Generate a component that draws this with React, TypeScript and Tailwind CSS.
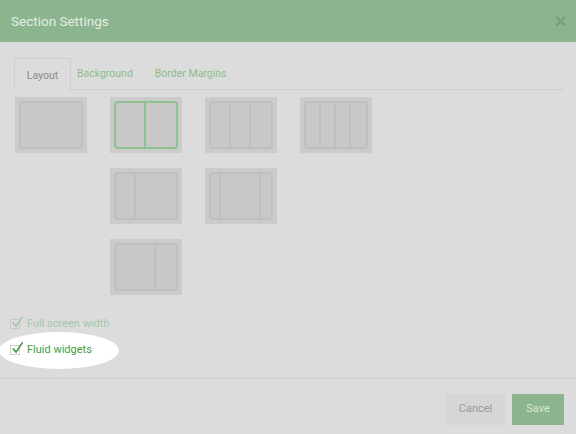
import { CSSProperties } from 'react';

type Thumb = { cols: number[]; active?: boolean };

const rows: (Thumb | null)[][] = [
  [{ cols: [1] }, { cols: [1, 1], active: true }, { cols: [1, 1, 1] }, { cols: [1, 1, 1, 1] }],
  [null, { cols: [1, 2] }, { cols: [1, 4, 1] }],
  [null, { cols: [2, 1] }],
];

function LayoutThumb({ cols, active }: Thumb) {
  const style: CSSProperties = { gridTemplateColumns: cols.map((c) => `${c}fr`).join(' ') };
  return (
    <button className="w-[72px] h-[56px] bg-[#cbcbcb] p-[4px]">
      <div
        className={`grid h-full rounded-[4px] border-2 bg-[#c8c8c8] ${active ? 'border-[#8cc390]' : 'border-[#bfbfbf]'}`}
        style={style}
      >
        {cols.map((_, i) => (
          <div
            key={i}
            className={i < cols.length - 1 ? `border-r-2 ${active ? 'border-[#8cc390]' : 'border-[#bfbfbf]'}` : ''}
          />
        ))}
      </div>
    </button>
  );
}

function Check({ label, strong }: { label: string; strong?: boolean }) {
  return (
    <label className="flex items-center gap-[7px] h-[16px]">
      <span className={`relative w-[10px] h-[10px] border ${strong ? 'border-[#cfcfcf] bg-white' : 'border-[#c8c8c8]'}`}>
        <svg viewBox="0 0 14 14" className="absolute -top-[5px] left-0 w-[13px] h-[13px]">
          <path
            d="M2 8 L5.5 12 L12.5 1.5"
            fill="none"
            stroke={strong ? '#3d9a3f' : '#a3c4a5'}
            strokeWidth="1.8"
          />
        </svg>
      </span>
      <span className={strong ? 'text-[#3f9e41]' : 'text-[#a4c7a6]'}>{label}</span>
    </label>
  );
}

export default function App() {
  return (
    <div className="w-[576px] h-[434px] bg-[#dcdcdc] flex flex-col font-['Roboto',sans-serif] overflow-hidden">
      <div className="h-[42px] shrink-0 bg-[#8bb48f] flex items-center justify-between pl-[11px] pr-[9px]">
        <h1 className="text-[13.5px] text-[#e3ede3]">Section Settings</h1>
        <span className="text-[#7c9e80] text-[16px] font-bold leading-none mt-[2px]">✕</span>
      </div>

      <div className="flex-1 px-[14px] pt-[16px]">
        <div className="flex items-end h-[32px] border-b border-[#cecece] mr-[-2px] text-[10.5px]">
          <div className="h-[32px] w-[57px] flex items-center justify-center border border-b-0 border-[#cecece] text-[#8a8a8a] bg-[#dcdcdc] mb-[-1px] pt-[2px]">
            Layout
          </div>
          <div className="h-[32px] flex items-center pl-[6px] pt-[2px] text-[#8cbc8e]">Background</div>
          <div className="h-[32px] flex items-center pl-[22px] pt-[2px] text-[#8cbc8e]">Border Margins</div>
        </div>

        <div className="flex flex-col gap-[15px] pt-[7px] pl-[1px]">
          {rows.map((row, r) => (
            <div key={r} className="flex gap-[23px]">
              {row.map((t, i) =>
                t ? <LayoutThumb key={i} {...t} /> : <div key={i} className="w-[72px] h-[56px]" />,
              )}
            </div>
          ))}
        </div>
      </div>

      <div className="text-[11px] pl-[10px] pb-[20px] flex flex-col gap-[10px]">
        <Check label="Full screen width" />
        <div className="relative">
          <div className="absolute left-[-11px] top-[-10px] w-[120px] h-[37px] rounded-[50%] bg-white" />
          <div className="relative">
            <Check label="Fluid widgets" strong />
          </div>
        </div>
      </div>

      <div className="h-[56px] shrink-0 border-t border-[#d0d0d0] flex items-start justify-end gap-[7px] pr-[12px] pt-[15px] text-[11px]">
        <button className="w-[59px] h-[31px] bg-[#d6d6d6] text-[#999999]">Cancel</button>
        <button className="w-[52px] h-[31px] bg-[#8bb48f] text-[#d9e8d9]">Save</button>
      </div>
    </div>
  );
}
